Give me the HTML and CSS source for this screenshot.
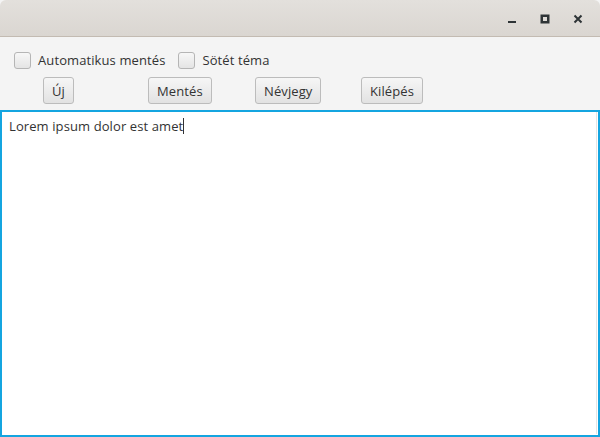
FILE: index.html
```html
<!DOCTYPE html>
<html>

<head>
    <title>Jegyzet</title>
    <meta name="viewport" content="width=device-width, initial-scale=1.0">
    <link rel="stylesheet" href="styles.css">
</head>

<body>
    <div class="titlebar">
        <button class="win-btn" title="Minimize">
            <svg width="10" height="10" viewBox="0 0 10 10"><rect x="1" y="7" width="8" height="2" fill="#2e3436"/></svg>
        </button>
        <button class="win-btn" title="Maximize">
            <svg width="10" height="10" viewBox="0 0 10 10"><rect x="1.75" y="1.75" width="6.5" height="6.5" fill="none" stroke="#2e3436" stroke-width="2.5"/></svg>
        </button>
        <button class="win-btn" title="Close">
            <svg width="10" height="10" viewBox="0 0 10 10"><path d="M1.5 1.5 L8.5 8.5 M8.5 1.5 L1.5 8.5" stroke="#2e3436" stroke-width="2"/></svg>
        </button>
    </div>
    <div class="content">
        <div class="options">
            <label class="check"><span class="box"></span>Automatikus mentés</label>
            <label class="check"><span class="box"></span>Sötét téma</label>
        </div>
        <div class="buttons">
            <div class="cell"><button class="btn">Új</button></div>
            <div class="cell"><button class="btn">Mentés</button></div>
            <div class="cell"><button class="btn">Névjegy</button></div>
            <div class="cell"><button class="btn">Kilépés</button></div>
        </div>
        <div class="editor">
            <div class="editor-inner">Lorem ipsum dolor est amet<span class="caret"></span></div>
        </div>
    </div>
</body>

</html>
```

FILE: styles.css
```css
* {
    box-sizing: border-box;
    padding: 0;
    margin: 0;
}

body {
    width: 600px;
    height: 437px;
    overflow: hidden;
    background: #f4f4f4;
    font-family: "Open Sans", "Noto Sans", sans-serif;
    font-size: 13px;
    letter-spacing: 0.1px;
    color: #333333;
    display: flex;
    flex-direction: column;
}

.titlebar {
    height: 37px;
    flex: none;
    display: flex;
    justify-content: flex-end;
    align-items: center;
    padding-right: 6px;
    padding-top: 1px;
    background: linear-gradient(#e3e0dc, #dad6d1);
    border-bottom: 1px solid #c3bbb2;
    border-radius: 6px 6px 0 0;
}

.win-btn {
    width: 33px;
    height: 24px;
    border: 0;
    background: transparent;
    display: flex;
    align-items: center;
    justify-content: center;
}

.content {
    flex: 1;
    display: flex;
    flex-direction: column;
}

.options {
    display: flex;
    gap: 13px;
    padding: 14px 0 0 14px;
    height: 40px;
}

.check {
    display: flex;
    align-items: center;
    height: 18px;
    gap: 7px;
    color: #333333;
}

.box {
    width: 17px;
    height: 17px;
    border: 1px solid #b5b5b5;
    border-radius: 3px;
    background: linear-gradient(#f7f7f7, #e4e4e4);
}

.buttons {
    display: grid;
    grid-template-columns: 105px 107px 106px 106px;
    padding-left: 43px;
    height: 33px;
}

.btn {
    height: 27px;
    padding: 0 8px;
    font-family: inherit;
    font-size: 13px;
    letter-spacing: 0.1px;
    color: #333333;
    border: 1px solid #bcbcbc;
    border-radius: 3px;
    background: linear-gradient(#f6f6f6, #e2e2e2);
}

.cell {
    display: flex;
}

.editor {
    flex: 1;
    border: 2px solid #14a5e0;
    background: #ffffff;
    padding: 0 1px 1px 0;
}

.editor-inner {
    height: 100%;
    padding: 5px 7px;
    line-height: 18px;
    color: #333333;
    border-right: 1px solid #e4e4e4;
}

.caret {
    display: inline-block;
    width: 1px;
    height: 16px;
    background: #333333;
    vertical-align: -3px;
}
```
